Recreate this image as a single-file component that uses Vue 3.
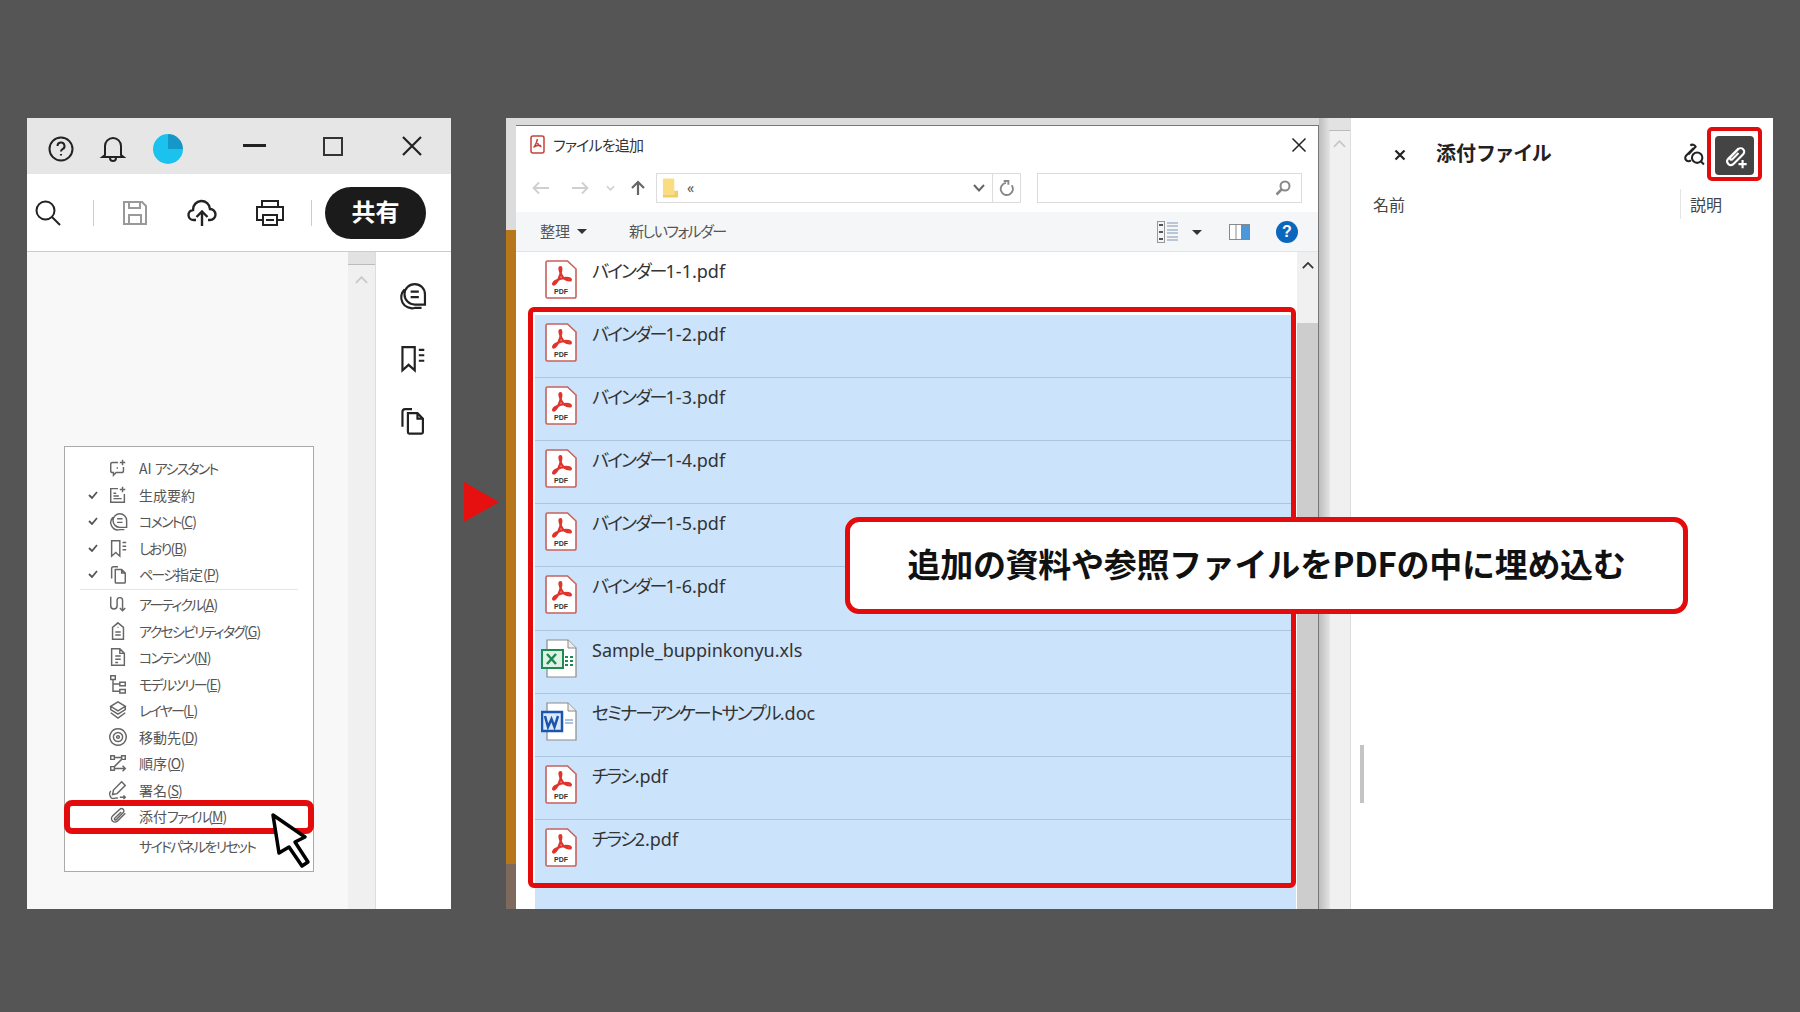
<script setup>
const icons = {
  ai: 'M11 5H5a2 2 0 0 0-2 2v7a2 2 0 0 0 2 2h1v3l3-3h6a2 2 0 0 0 2-2v-4M9.500 11h1.500M16 2v6M13 5h6',
  gen: 'M11 4H3v15h15v-9M6 9h3M6 12h6M6 15h9M16 2v6M13 5h6',
  comment: 'M13 3a7.500 7.500 0 0 0 0 15h7.500v-7.500A7.500 7.500 0 0 0 13 3zM5.500 7a8 8 0 0 0 7.500 13.500h5M10 8.500h6M10 12.500h6',
  bookmark: 'M4 3h9v17l-4.500-4L4 20zM16 5h4M16 9h4M16 13h4',
  pages: 'M4 16V5a2 2 0 0 1 2-2h5M8 6h7l4 4v10a1 1 0 0 1-1 1H9a1 1 0 0 1-1-1zM15 6v4h4',
  article: 'M3 3v10a3.500 3.500 0 0 0 7 0V7a3 3 0 0 1 6 0v11M13 15.500l3 3 3-3',
  tag: 'M11 2l6 5v13H5V7zM8 12h6M8 15.500h6M10.500 7h1',
  content: 'M4 2h9l5 5v13H4zM13 2v5h5M8 10h6M8 13.500h6M8 17h3',
  tree: 'M3 2h5v4H3zM5.500 6v13H13M5.500 11H13M13 9h6v4h-6zM13 17h6v4h-6z',
  layers: 'M11 2l8 5-8 5-8-5zM3 7.500v3l8 5 8-5v-3M3 14l8 6 8-6',
  target: 'M11 2a9 9 0 1 0 .01 0zM11 6a5 5 0 1 0 .01 0zM11 9.500a1.500 1.500 0 1 0 .01 0z',
  order: 'M3 3h4v4H3zM15 3h4v4h-4zM3 15h4v4H3zM7 5h8M15 7L7 15M7 17h12M16 14l3 3-3 3',
  sign: 'M15 2l4 4-9 9-5 1 1-5zM3 12a6 6 0 0 0 1 8c3 1 5-1 7 0M13 19h6M17 17l2 2-2 2',
  clip: 'M19 8l-8.500 8.500a3.800 3.800 0 0 1-5.500-5.500L13 3.500a2.600 2.600 0 0 1 3.700 3.700L9 15a1.100 1.100 0 0 1-1.600-1.600L14.500 6.500',
  none: ''
}
const segs = (s) =>
  s.split(/([ぁ-んァ-ヶー]+)/).filter(Boolean).map((t) => ({ t, kana: /^[ぁ-んァ-ヶー]/.test(t) }))
const topRows = [
  { icon: 'ai', label: 'AI アシスタント' },
  { icon: 'gen', label: '生成要約', check: true },
  { icon: 'comment', label: 'コメント', key: 'C', check: true },
  { icon: 'bookmark', label: 'しおり', key: 'B', check: true },
  { icon: 'pages', label: 'ページ指定', key: 'P', check: true }
]
const bottomRows = [
  { icon: 'article', label: 'アーティクル', key: 'A' },
  { icon: 'tag', label: 'アクセシビリティタグ', key: 'G' },
  { icon: 'content', label: 'コンテンツ', key: 'N' },
  { icon: 'tree', label: 'モデルツリー', key: 'E' },
  { icon: 'layers', label: 'レイヤー', key: 'L' },
  { icon: 'target', label: '移動先', key: 'D' },
  { icon: 'order', label: '順序', key: 'O' },
  { icon: 'sign', label: '署名', key: 'S' },
  { icon: 'clip', label: '添付ファイル', key: 'M' },
  { icon: 'none', label: 'サイドパネルをリセット', reset: true }
]
const files = [
  { name: 'バインダー1-1.pdf', type: 'pdf' },
  { name: 'バインダー1-2.pdf', type: 'pdf', sel: true },
  { name: 'バインダー1-3.pdf', type: 'pdf', sel: true },
  { name: 'バインダー1-4.pdf', type: 'pdf', sel: true },
  { name: 'バインダー1-5.pdf', type: 'pdf', sel: true },
  { name: 'バインダー1-6.pdf', type: 'pdf', sel: true },
  { name: 'Sample_buppinkonyu.xls', type: 'xls', sel: true },
  { name: 'セミナーアンケートサンプル.doc', type: 'doc', sel: true },
  { name: 'チラシ.pdf', type: 'pdf', sel: true },
  { name: 'チラシ2.pdf', type: 'pdf', sel: true }
]
</script>

<template>
  <div class="stage">
    <section class="left">
      <header class="winbar">
        <svg class="i help" viewBox="0 0 26 26"><circle cx="13" cy="13" r="11.500"/><path d="M9.500 10a3.500 3.500 0 1 1 5 3.200c-1 .6-1.500 1.200-1.500 2.300M13 18v1.500"/></svg>
        <svg class="i bell" viewBox="0 0 26 28"><path d="M5 20V11a8 8 0 0 1 16 0v9l2.500 2h-21zM10 23a3 3 0 0 0 6 0"/></svg>
        <span class="avatar"></span>
        <span class="min"></span>
        <span class="max"></span>
        <svg class="i close" viewBox="0 0 22 20"><path d="M2 1l18 18M20 1L2 19"/></svg>
      </header>
      <div class="tools">
        <svg class="i search" viewBox="0 0 28 28"><circle cx="11.500" cy="11.500" r="9"/><path d="M18 18l8 8"/></svg>
        <span class="vr vr1"></span>
        <svg class="i save" viewBox="0 0 26 26"><path d="M2 2h18l4 4v18H2zM7 2v6h11V2M7 24v-9h12v9"/></svg>
        <svg class="i upload" viewBox="0 0 30 30"><path d="M9 22H7a5 5 0 0 1-1-10a8.500 8.500 0 0 1 17-1a5.500 5.500 0 0 1 0 11h-2M15 28V14M9.500 19l5.500-5.500 5.500 5.500"/></svg>
        <svg class="i print" viewBox="0 0 30 28"><path d="M7 8V2h16v6M7 21H2V8h26v13h-5M8 16h14v10H8zM11 21h8"/></svg>
        <span class="vr vr2"></span>
        <button class="share">共有</button>
      </div>
      <div class="leftbody">
        <div class="pane">
          <nav class="menu">
            <div v-for="r in topRows" :key="r.label" class="mrow">
              <span class="chk"><svg v-if="r.check" viewBox="0 0 10 8"><path d="M1 4l3 3 5-6"/></svg></span>
              <svg class="micon" viewBox="0 0 22 22"><path :d="icons[r.icon]"/></svg>
              <span class="mlabel"><span v-for="(s, n) in segs(r.label)" :key="n" :class="{ kana: s.kana }">{{ s.t }}</span><span v-if="r.key" class="mkey">(<u>{{ r.key }}</u>)</span></span>
            </div>
            <div class="msep"></div>
            <div v-for="r in bottomRows" :key="r.label" class="mrow" :class="{ reset: r.reset }">
              <span class="chk"></span>
              <svg class="micon" viewBox="0 0 22 22"><path :d="icons[r.icon]"/></svg>
              <span class="mlabel"><span v-for="(s, n) in segs(r.label)" :key="n" :class="{ kana: s.kana }">{{ s.t }}</span><span v-if="r.key" class="mkey">(<u>{{ r.key }}</u>)</span></span>
            </div>
          </nav>
        </div>
        <div class="vscroll">
          <span class="thumb"></span>
          <svg class="up" viewBox="0 0 14 8"><path d="M1 7l6-6 6 6"/></svg>
        </div>
        <aside class="rail">
          <svg class="i" viewBox="0 0 22 22"><path :d="icons.comment"/></svg>
          <svg class="i" viewBox="0 0 22 22"><path :d="icons.bookmark"/></svg>
          <svg class="i" viewBox="0 0 22 22"><path :d="icons.pages"/></svg>
        </aside>
      </div>
    </section>

    <div class="arrowcol"><span class="arrow"></span></div>

    <section class="main">
      <div class="strip"><span class="strip-top"></span><span class="strip-orange"></span><span class="strip-wood"></span></div>
      <div class="dialogwrap">
        <div class="dialog">
          <div class="dtitle">
            <svg class="ttlicon" viewBox="0 0 15 19"><rect x="1" y="1" width="13" height="17" rx="2" fill="#fff" stroke="#c8403c" stroke-width="1.500"/><path d="M7.500 4c-.8 3 -2 7-4 8.500M7.500 8c1 2 2.500 3.500 4 3.500M4 12c2-1.500 4-2 7-1.500" fill="none" stroke="#c8403c" stroke-width="1.500"/></svg>
            <span class="ttl">ファイルを追加</span>
            <svg class="dclose" viewBox="0 0 16 16"><path d="M1.500 1.500l13 13M14.500 1.500l-13 13"/></svg>
          </div>
          <div class="addr">
            <svg class="nav n-back" viewBox="0 0 18 14"><path d="M17 7H2M7 1.500L1.500 7 7 12.500"/></svg>
            <svg class="nav n-fwd" viewBox="0 0 18 14"><path d="M1 7h15M11 1.500L16.500 7 11 12.500"/></svg>
            <svg class="nav n-down" viewBox="0 0 10 6"><path d="M1 1l4 4 4-4"/></svg>
            <svg class="nav n-up" viewBox="0 0 16 16"><path d="M8 15V2M2 8l6-6 6 6"/></svg>
            <div class="addrbox">
              <svg class="folder" viewBox="0 0 18 22"><path d="M1 1h11l1 0v17H1z" fill="#fbdc80"/><path d="M1 18h16v3H1z M13 14h4v4h-4z" fill="#f2cd67"/></svg>
              <span class="crumb">«</span>
              <svg class="nav chev" viewBox="0 0 12 8"><path d="M1 1l5 5.500L11 1"/></svg>
              <span class="refresh"><svg class="nav" viewBox="0 0 16 18"><path d="M13.500 5.500a6.500 6.500 0 1 1-6-2.500M5 1h5v4"/></svg></span>
            </div>
            <div class="searchbox"><svg class="nav" viewBox="0 0 16 16"><circle cx="10" cy="6" r="4.500"/><path d="M6.500 9.500L1.500 14.500" stroke-width="2.500"/></svg></div>
          </div>
          <div class="dtools">
            <span class="org">整理<i class="tri"></i></span>
            <span class="newf">新しいフォルダー</span>
            <svg class="viewi" viewBox="0 0 21 22"><rect x=".5" y=".5" width="7" height="21" fill="#f4f4f4" stroke="#999"/><path d="M2 4h4M2 11h4M2 18h4" stroke="#555" stroke-width="2"/><path d="M10 2h11M10 5h11M10 9h11M10 12h11M10 16h11M10 19h11" stroke="#7e97b3" stroke-width="1.200"/></svg>
            <i class="tri tri2"></i>
            <svg class="panei" viewBox="0 0 21 16"><rect x=".5" y=".5" width="20" height="15" fill="#fff" stroke="#888"/><rect x="12" y="1" width="8" height="14" fill="#4c97d8"/><path d="M7 1v14" stroke="#888"/></svg>
            <span class="helpb">?</span>
          </div>
          <div class="listwrap">
            <div class="list">
              <div v-for="f in files" :key="f.name" class="frow" :class="{ sel: f.sel }">
                <svg v-if="f.type === 'pdf'" class="ficon" viewBox="0 0 32 39">
                  <path d="M2.500 1h20l8.500 8v27.500a1.500 1.500 0 0 1-1.500 1.500h-27A1.500 1.500 0 0 1 1 36.500V2.500A1.500 1.500 0 0 1 2.500 1z" fill="#fff" stroke="#c9605c" stroke-width="1.600"/>
                  <path d="M15.500 7c-1.500 0-1.500 3 1 8 1.500 3 4 5 8 5.500 2 .2 2-2 -1-2.500-4-.5-9 .5-13 3-2 1.200-3 3-2 3.500 1.500.5 3.500-2.500 5-5.500 2-4 4-12 2-12z" fill="none" stroke="#e0332c" stroke-width="2.200"/>
                  <text x="16" y="34" text-anchor="middle" class="pdft">PDF</text>
                </svg>
                <svg v-else-if="f.type === 'xls'" class="ficon wide" viewBox="0 0 36 39">
                  <path d="M6 1h21l8 8v29H6z" fill="#fff" stroke="#8a8a8a" stroke-width="1.200"/>
                  <path d="M27 1v8h8" fill="#eee" stroke="#8a8a8a"/>
                  <rect x="1" y="11" width="21" height="18" fill="#dff0e4" stroke="#1d8a52" stroke-width="2"/>
                  <path d="M6 15l9 10M15 15l-9 10" stroke="#1d8a52" stroke-width="2.500"/>
                  <path d="M24 17h3v2h-3zM29 17h3v2h-3zM24 21h3v2h-3zM29 21h3v2h-3zM24 25h3v2h-3zM29 25h3v2h-3z" fill="#1d8a52"/>
                </svg>
                <svg v-else class="ficon wide" viewBox="0 0 36 39">
                  <path d="M6 1h21l8 8v29H6z" fill="#fff" stroke="#8a8a8a" stroke-width="1.200"/>
                  <path d="M27 1v8h8" fill="#eee" stroke="#8a8a8a"/>
                  <rect x="1" y="10" width="20" height="19" fill="#dbe8f7" stroke="#1a56b0" stroke-width="2.500"/>
                  <path d="M4 14l3 11 3.500-8 3 8 3.500-11" fill="none" stroke="#1a56b0" stroke-width="2.500"/>
                  <path d="M24 18h8M24 21h8" stroke="#8fb0d8" stroke-width="1.500"/>
                </svg>
                <span class="fname"><span v-for="(s, n) in segs(f.name)" :key="n" :class="{ kana: s.kana }">{{ s.t }}</span></span>
              </div>
              <div class="tail"></div>
              <div class="redbox"></div>
            </div>
            <div class="lscroll">
              <svg class="lup" viewBox="0 0 14 8"><path d="M1 7l6-6 6 6"/></svg>
              <span class="lthumb"></span>
            </div>
          </div>
        </div>
      </div>
      <div class="gutter"><span class="gthumb"></span><svg class="up" viewBox="0 0 14 8"><path d="M1 7l6-6 6 6"/></svg></div>
      <aside class="attach">
        <div class="ahead">
          <svg class="ax" viewBox="0 0 12 12"><path d="M1.500 1.500l9 9M10.500 1.500l-9 9"/></svg>
          <h2>添付<span class="kana">ファイル</span></h2>
          <svg class="asearch" viewBox="0 0 24 24"><path d="M12 6L5 13a3 3 0 0 0 4.500 4.500M9 3.500a3 3 0 0 1 5 1L7 12"/><circle cx="15.500" cy="15" r="5"/><path d="M19 18.500l3 3"/></svg>
          <span class="addbtn">
            <svg viewBox="0 0 24 24"><path d="M15 5.500L6 14.500a3.200 3.200 0 0 0 4.500 4.500L19 10.500a3 3 0 0 0-4.300-4.300L8 13a1.200 1.200 0 0 0 1.700 1.700L15 9.500M15 19h7M18.500 15.500v7"/></svg>
          </span>
        </div>
        <div class="acols"><span class="cname">名前</span><span class="cdesc">説明</span></div>
        <span class="agrip"></span>
      </aside>
    </section>

    <div class="hl hl-menu"></div>
    <svg class="cursor" viewBox="0 0 42 58"><path d="M3 3L35 25 25 30 38 50 32 54 19 35 9 41z" fill="#fff" stroke="#000" stroke-width="3.500" stroke-linejoin="round"/></svg>
    <div class="hl hl-add"></div>
    <div class="callout">追加の資料や参照ファイルをPDFの中に埋め込む</div>
  </div>
</template>

<style scoped>
.stage {
  position: relative;
  width: 1800px;
  height: 1012px;
  box-sizing: border-box;
  padding: 118px 27px 103px;
  display: flex;
  overflow: hidden;
  background: #555;
  font-family: "Noto Sans", "Noto Sans CJK JP", sans-serif;
  font-feature-settings: "palt";
  color: #333;
}
svg { display: block; flex: none; fill: none; }
.i { stroke: #222; stroke-width: 2; fill: none; }

.left { width: 424px; display: flex; flex-direction: column; background: #fff; }
.winbar { height: 56px; flex: none; background: #e6e6e6; display: flex; align-items: center; }
.help { width: 26px; height: 26px; margin: 5px 0 0 21px; }
.bell { width: 28px; height: 28px; margin: 5px 0 0 25px; }
.avatar { width: 30px; height: 30px; margin: 5px 0 0 26px; border-radius: 50%; background: conic-gradient(#1598c8 0 25%, #1cc2ee 25% 100%); }
.min { width: 23px; height: 3px; margin: -2px 0 0 60px; background: #222; }
.max { width: 20px; height: 19px; margin: 0 0 0 57px; border: 2px solid #333; box-sizing: border-box; }
.close { width: 22px; height: 20px; margin: 0 0 0 58px; stroke-width: 2.200; }

.tools { height: 77px; flex: none; background: #fff; border-bottom: 1px solid #ccc; display: flex; align-items: center; box-sizing: content-box; }
.search { width: 28px; height: 28px; margin-left: 7px; }
.vr { width: 1px; height: 26px; background: #ccc; }
.vr1 { margin-left: 31px; }
.save { width: 26px; height: 26px; margin-left: 28px; stroke: #999; }
.upload { width: 30px; height: 30px; margin-left: 39px; stroke-width: 2.400; }
.print { width: 30px; height: 28px; margin-left: 38px; }
.vr2 { margin-left: 26px; }
.share { width: 101px; height: 52px; margin-left: 13px; border: 0; padding: 0 0 5px; border-radius: 26px; background: #1b1b1b; color: #fff; font: 700 24px "Noto Sans CJK JP", sans-serif; }

.leftbody { flex: 1; display: flex; min-height: 0; }
.pane { width: 321px; flex: none; box-sizing: border-box; background: #f8f8f8; padding: 194px 0 0 37px; }
.menu { width: 250px; height: 426px; box-sizing: border-box; background: #fff; border: 1px solid #aaa; padding-top: 8px; }
.mrow { height: 26.500px; display: flex; align-items: center; color: #555; font-size: 14px; font-family: "Noto Sans CJK JP", sans-serif; }
.mrow.reset { margin-top: 3px; }
.chk { width: 12px; margin-left: 23px; flex: none; }
.chk svg { width: 10px; height: 8px; stroke: #555; stroke-width: 1.800; }
.micon { width: 20px; height: 20px; margin-left: 8px; stroke: #666; stroke-width: 1.600; }
.mlabel { margin-left: 11px; white-space: nowrap; }
.mlabel .kana { letter-spacing: -1.800px; }
.mkey { letter-spacing: -1px; }
.msep { height: 1px; margin: 1px 15px 1.500px; background: #e6e6e6; }

.vscroll { width: 28px; flex: none; background: #f0f0f0; border-right: 1px solid #ddd; box-sizing: border-box; display: flex; flex-direction: column; align-items: center; }
.thumb { width: 100%; height: 13px; background: #e2e2e2; border-bottom: 1px solid #bbb; box-sizing: border-box; flex: none; }
.up { width: 13px; height: 8px; margin-top: 11px; stroke: #c8c8c8; stroke-width: 2; }
.rail { flex: 1; background: #fff; display: flex; flex-direction: column; align-items: center; gap: 32.500px; padding: 28px 4px 0 0; }
.rail .i { width: 30px; height: 30px; stroke-width: 1.600; }

.arrowcol { width: 55px; flex: none; display: flex; align-items: center; padding: 0 0 0 13px; box-sizing: border-box; }
.arrow { width: 0; height: 0; margin-top: -23px; border-left: 35px solid #e61010; border-top: 20px solid transparent; border-bottom: 20px solid transparent; }

.main { flex: 1; display: flex; background: #fff; min-width: 0; }
.strip { width: 10px; flex: none; display: flex; flex-direction: column; }
.strip-top { height: 112px; background: #dcdcdc; }
.strip-orange { flex: 1; background: #b8761a; }
.strip-wood { height: 45px; background: #7d6a5c; }
.dialogwrap { width: 803px; flex: none; padding-top: 7px; background: #dcdcdc; box-sizing: content-box; display: flex; }
.dialog { width: 803px; box-sizing: border-box; background: #fff; display: flex; flex-direction: column; border-top: 1px solid #777; border-right: 1px solid #777; }

.dtitle { height: 40px; flex: none; box-sizing: border-box; display: flex; align-items: center; padding: 0 0 3px 14px; font-size: 15px; font-family: "Noto Sans CJK JP", sans-serif; color: #333; }
.ttl { letter-spacing: -.8px; }
.ttlicon { width: 15px; height: 19px; margin-right: 8px; }
.dclose { width: 16px; height: 16px; margin-left: auto; margin-right: 11px; stroke: #222; stroke-width: 1.500; }

.addr { height: 46px; flex: none; display: flex; align-items: flex-start; padding-top: 7px; box-sizing: border-box; }
.nav { stroke: #cfcfcf; stroke-width: 1.800; }
.n-back { width: 18px; height: 14px; margin: 8px 0 0 16px; }
.n-fwd { width: 18px; height: 14px; margin: 8px 0 0 21px; }
.n-down { width: 9px; height: 6px; margin: 12px 0 0 17px; }
.n-up { width: 16px; height: 16px; margin: 7px 0 0 15px; stroke: #666; stroke-width: 2.200; }
.addrbox { width: 365px; height: 30px; margin-left: 10px; box-sizing: border-box; border: 1px solid #dcdcdc; display: flex; align-items: center; }
.folder { width: 17px; height: 22px; margin-left: 5px; }
.crumb { margin-left: 8px; font-size: 14px; line-height: 1; color: #555; }
.chev { width: 12px; height: 8px; margin-left: auto; stroke: #666; stroke-width: 2; }
.refresh { width: 27px; height: 100%; margin-left: 7px; border-left: 1px solid #dcdcdc; display: flex; align-items: center; justify-content: center; }
.refresh svg { width: 15px; height: 17px; stroke: #888; stroke-width: 2; }
.searchbox { width: 265px; height: 30px; margin-left: 16px; box-sizing: border-box; border: 1px solid #dcdcdc; display: flex; align-items: center; justify-content: flex-end; padding-right: 10px; }
.searchbox svg { width: 16px; height: 16px; stroke: #888; stroke-width: 2; }

.dtools { height: 40px; flex: none; background: #f5f6f7; border-bottom: 1px solid #e4e4e4; box-sizing: border-box; display: flex; align-items: center; font-family: "Noto Sans CJK JP", sans-serif; font-size: 15px; color: #555; }
.org { margin-left: 24px; display: flex; align-items: center; padding-bottom: 2px; }
.tri { display: block; width: 0; height: 0; margin-left: 7px; margin-top: 2px; border-top: 5px solid #333; border-left: 5px solid transparent; border-right: 5px solid transparent; }
.newf { margin-left: 42px; letter-spacing: -1.500px; padding-bottom: 2px; }
.viewi { width: 21px; height: 22px; margin-left: auto; }
.tri2 { margin-left: 14px; margin-right: 27px; }
.panei { width: 21px; height: 16px; }
.helpb { width: 22px; height: 22px; margin-left: 26px; margin-right: 20px; border-radius: 50%; background: #0b66bd; color: #fff; font: 700 16px/22px "Liberation Sans", sans-serif; text-align: center; }

.listwrap { flex: 1; min-height: 0; display: flex; }
.list { position: relative; width: 781px; flex: none; display: flex; flex-direction: column; background: #fff; }
.frow { height: 63.100px; flex: none; box-sizing: border-box; margin: 0 1px 0 19px; padding-left: 10px; display: flex; align-items: flex-start; }
.frow.sel { background: #cce4fb; border-bottom: 1px solid #a9c6dd; }
.frow.sel:nth-last-child(3) { border-bottom: 0; }
.ficon { width: 32px; height: 39px; margin-top: 8px; }
.ficon.wide { width: 36px; margin-left: -4px; }
.pdft { font: 700 7px "Liberation Sans", sans-serif; fill: #333; }
.fname { margin-left: 15px; font-size: 18px; line-height: 38px; color: #333; white-space: nowrap; }
.fname .kana { letter-spacing: -1.900px; }
.tail { flex: 1; margin: 0 1px 0 19px; background: #cce4fb; }
.redbox { position: absolute; left: 12px; top: 55px; width: 768px; height: 581px; box-sizing: border-box; border: 5.500px solid #e30b0b; border-radius: 6px; }
.lscroll { flex: 1; background: #f0f0f0; display: flex; flex-direction: column; align-items: center; }
.lup { width: 12px; height: 7px; margin-top: 10px; stroke: #333; stroke-width: 2; }
.lthumb { width: 100%; flex: 1; margin-top: 54px; background: #cdcdcd; }

.gutter { width: 32px; flex: none; box-sizing: border-box; display: flex; flex-direction: column; align-items: flex-end; background: linear-gradient(90deg, #bdbdbd 0, #e4e4e4 11px, #f0f0f0 11px, #f0f0f0 100%); border-right: 1px solid #ddd; position: relative; }
.gthumb { width: 21px; height: 13px; background: #e2e2e2; border-bottom: 1px solid #bbb; box-sizing: border-box; flex: none; }
.gutter .up { margin-top: 9px; margin-right: 4px; }

.attach { flex: 1; position: relative; min-width: 0; background: #fff; display: flex; flex-direction: column; }
.ahead { height: 73px; flex: none; display: flex; align-items: center; box-sizing: border-box; }
.ax { width: 12px; height: 12px; margin-left: 43px; stroke: #222; stroke-width: 2.200; }
.ahead h2 { margin: -4px 0 0 30px; font: 700 20px "Noto Sans CJK JP", sans-serif; color: #222; }
.ahead h2 .kana { letter-spacing: -1.400px; }
.asearch { width: 25px; height: 25px; margin-left: auto; stroke: #222; stroke-width: 2; }
.addbtn { width: 39px; height: 39px; margin: 2px 19px 0 9px; border-radius: 4px; background: #444; display: flex; align-items: center; justify-content: center; }
.addbtn svg { width: 28px; height: 28px; stroke: #fff; stroke-width: 1.800; }
.acols { height: 30px; margin-top: -2px; display: flex; align-items: center; font: 400 16px "Noto Sans CJK JP", sans-serif; color: #444; }
.cname { margin-left: 22px; width: 307px; flex: none; }
.cdesc { padding-left: 9px; height: 30px; line-height: 30px; border-left: 1px solid #e4e4e4; }
.agrip { position: absolute; left: 9px; top: 627px; width: 4px; height: 58px; background: #c4c4c4; }

.hl { position: absolute; box-sizing: border-box; border-style: solid; border-color: #e30b0b; }
.hl-menu { left: 64px; top: 800px; width: 250px; height: 34px; border-width: 6px; border-radius: 8px; }
.hl-add { left: 1707px; top: 127px; width: 55px; height: 54px; border-width: 4px; border-radius: 5px; }
.cursor { position: absolute; left: 270px; top: 812px; width: 42px; height: 58px; }
.callout { position: absolute; left: 845px; top: 517px; width: 843px; height: 97px; box-sizing: border-box; padding-bottom: 5px; border: 5px solid #e30b0b; border-radius: 14px; background: #fff; display: flex; align-items: center; justify-content: center; font: 700 33px "Noto Sans CJK JP", sans-serif; font-feature-settings: normal; letter-spacing: -.3px; color: #111; white-space: nowrap; }
</style>
